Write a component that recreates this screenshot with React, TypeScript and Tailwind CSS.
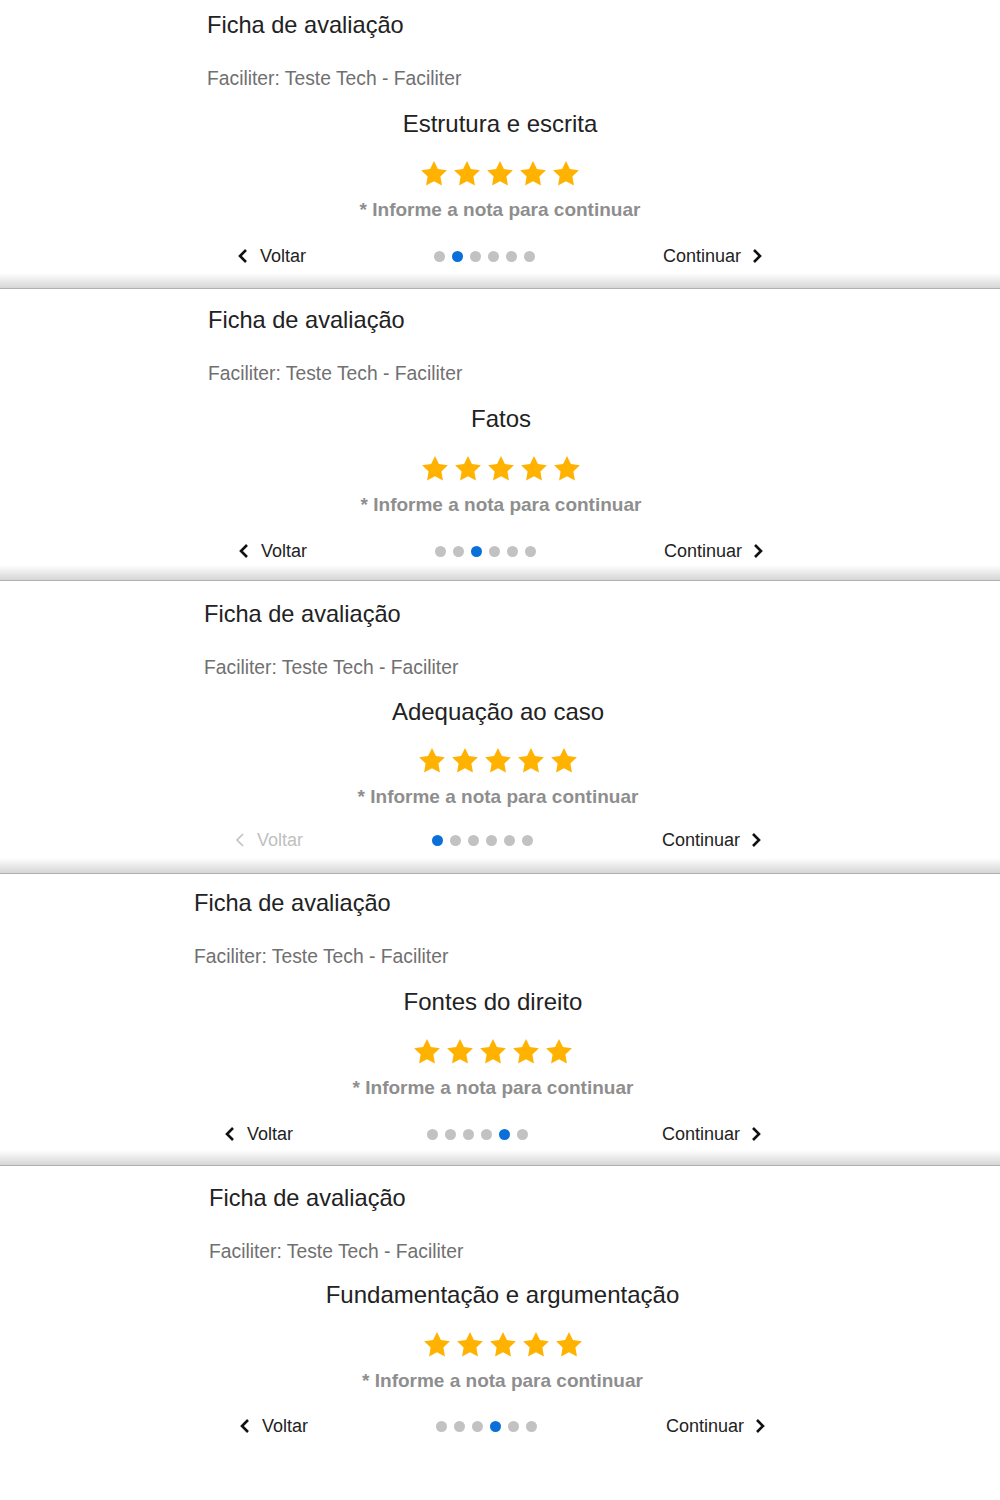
import React from "react";

type Step = {
  title: string;
  active: number;
  canGoBack: boolean;
  shift: string;
  top: string;
  height: string;
  gaps: [string, string, string];
  last?: boolean;
};

const normal: [string, string, string] = ["mt-[18px]", "mt-[19px]", "mt-[22px]"];

const steps: Step[] = [
  { title: "Estrutura e escrita", active: 1, canGoBack: true, shift: "ml-[207px] w-[586px]", top: "pt-[10px]", height: "h-[289px]", gaps: normal },
  { title: "Fatos", active: 2, canGoBack: true, shift: "ml-[208px] w-[586px]", top: "pt-[16px]", height: "h-[292px]", gaps: normal },
  { title: "Adequação ao caso", active: 0, canGoBack: false, shift: "ml-[204px] w-[588px]", top: "pt-[18px]", height: "h-[293px]", gaps: ["mt-[17px]", "mt-[18px]", "mt-[19px]"] },
  { title: "Fontes do direito", active: 4, canGoBack: true, shift: "ml-[194px] w-[598px]", top: "pt-[14px]", height: "h-[292px]", gaps: normal },
  { title: "Fundamentação e argumentação", active: 3, canGoBack: true, shift: "ml-[209px] w-[587px]", top: "pt-[17px]", height: "h-[334px]", gaps: ["mt-[16px]", "mt-[19px]", "mt-[21px]"], last: true },
];

function Star() {
  return (
    <svg viewBox="0 0 24 24" className="w-[32px] h-[32px]">
      <path
        d="M12 2.2l2.95 6.1 6.7.95-4.85 4.7 1.15 6.65L12 17.45 6.05 20.6l1.15-6.65-4.85-4.7 6.7-.95z"
        fill="#ffb300"
      />
    </svg>
  );
}

function Chevron({ dir, disabled }: { dir: "left" | "right"; disabled?: boolean }) {
  return (
    <svg viewBox="0 0 11 16" className="w-[11px] h-[16px]">
      <polyline
        points={dir === "left" ? "9,2 3,8 9,14" : "2,2 8,8 2,14"}
        fill="none"
        stroke={disabled ? "#c4c4c4" : "#111"}
        strokeWidth={disabled ? 1.7 : 2.6}
      />
    </svg>
  );
}

function Panel({ step }: { step: Step }) {
  return (
    <div className={`flex flex-col bg-white ${step.height} ${step.top}`}>
      <div className={`flex flex-col ${step.shift}`}>
        <h1 className="text-[23.6px] leading-[30px] text-[#222]">Ficha de avaliação</h1>
        <p className="mt-[27px] text-[19.3px] leading-[24px] text-[#707070]">
          Faciliter: Teste Tech - Faciliter
        </p>
        <h2 className={`${step.gaps[0]} text-center text-[24px] leading-[30px] text-[#222]`}>{step.title}</h2>
        <div className={`${step.gaps[1]} flex justify-center gap-[1px]`}>
          {[0, 1, 2, 3, 4].map((i) => (
            <Star key={i} />
          ))}
        </div>
        <p className="mt-[8px] text-center text-[19px] leading-[24px] font-bold text-[#8e8e8e]">
          * Informe a nota para continuar
        </p>
        <div className={`${step.gaps[2]} h-[24px] px-[30px] flex items-center justify-between`}>
          <button
            className={`flex items-center gap-[12px] text-[18px] ${step.canGoBack ? "text-[#222]" : "text-[#c0c0c0]"}`}
          >
            <Chevron dir="left" disabled={!step.canGoBack} />
            <span>Voltar</span>
          </button>
          <div className="flex items-center gap-[7px]">
            {[0, 1, 2, 3, 4, 5].map((i) => (
              <span
                key={i}
                className={`block w-[11px] h-[11px] rounded-full ${i === step.active ? "bg-[#0a6fd8]" : "bg-[#c2c2c2]"}`}
              />
            ))}
          </div>
          <button className="flex items-center gap-[11px] text-[18px] text-[#222]">
            <span>Continuar</span>
            <Chevron dir="right" />
          </button>
        </div>
      </div>
      {!step.last && (
        <div className="mt-auto">
          <div className="h-[15px] bg-linear-to-b from-white to-[#d6d6d6]" />
          <div className="h-px bg-[#b0b0b0]" />
        </div>
      )}
    </div>
  );
}

export default function App() {
  return (
    <div className="w-[1000px] h-[1500px] bg-white overflow-hidden" style={{ fontFamily: '"Liberation Sans", Arial, sans-serif' }}>
      {steps.map((s, i) => (
        <Panel key={i} step={s} />
      ))}
    </div>
  );
}
